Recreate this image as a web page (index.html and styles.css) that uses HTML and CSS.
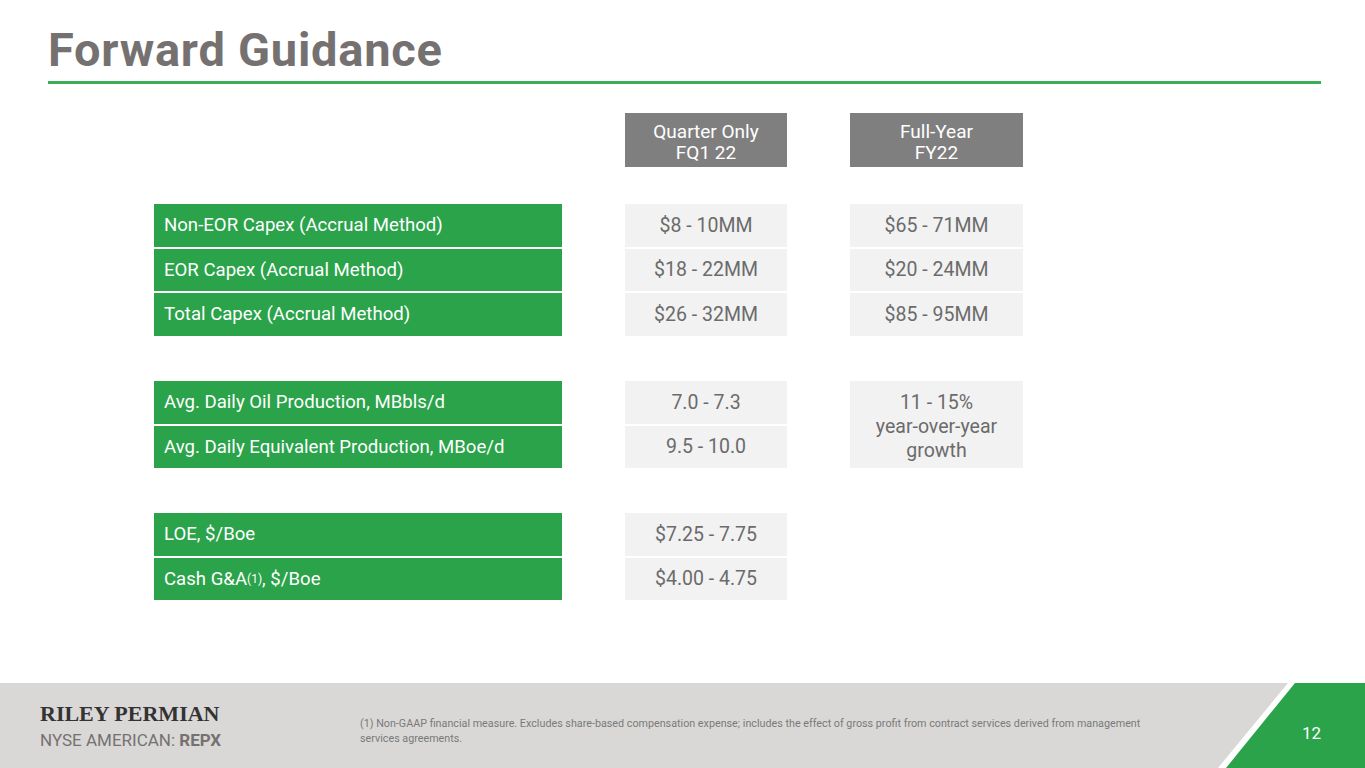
FILE: index.html
```html
<!DOCTYPE html>
<html lang="en">
<head>
<meta charset="utf-8">
<title>Forward Guidance</title>
<link rel="stylesheet" href="styles.css">
</head>
<body>
<div class="slide">
  <main class="content">
    <h1 class="title">Forward Guidance</h1>
    <div class="rule"></div>
    <div class="table">
      <div class="head c1">Quarter Only<br>FQ1 22</div>
      <div class="head c2">Full-Year<br>FY22</div>
      <div class="sp sp1"></div>

      <div class="label r1">Non-EOR Capex (Accrual Method)</div>
      <div class="val c1 r1">$8 - 10MM</div>
      <div class="val c2 r1">$65 - 71MM</div>

      <div class="label r2">EOR Capex (Accrual Method)</div>
      <div class="val c1 r2">$18 - 22MM</div>
      <div class="val c2 r2">$20 - 24MM</div>

      <div class="label r3">Total Capex (Accrual Method)</div>
      <div class="val c1 r3">$26 - 32MM</div>
      <div class="val c2 r3">$85 - 95MM</div>

      <div class="sp sp2"></div>

      <div class="label r4">Avg. Daily Oil Production, MBbls/d</div>
      <div class="val c1 r4">7.0 - 7.3</div>
      <div class="val c2 r45 multi">11 - 15%<br>year-over-year<br>growth</div>

      <div class="label r5">Avg. Daily Equivalent Production, MBoe/d</div>
      <div class="val c1 r5">9.5 - 10.0</div>

      <div class="sp sp3"></div>

      <div class="label r6">LOE, $/Boe</div>
      <div class="val c1 r6">$7.25 - 7.75</div>

      <div class="label r7">Cash G&amp;A<sup>(1)</sup>, $/Boe</div>
      <div class="val c1 r7">$4.00 - 4.75</div>
    </div>
  </main>
  <footer class="footer">
    <div class="brand">
      <div class="brand-name">RILEY PERMIAN</div>
      <div class="brand-ticker">NYSE AMERICAN: <b>REPX</b></div>
    </div>
    <div class="footnote">(1) Non-GAAP financial measure. Excludes share-based compensation expense; includes the effect of gross profit from contract services derived from management<br>services agreements.</div>
    <div class="corner">
      <div class="corner-green"><span class="page-num">12</span></div>
    </div>
  </footer>
</div>
</body>
</html>
```

FILE: styles.css
```css
* { box-sizing: border-box; }
html, body { margin: 0; padding: 0; background: #ffffff; }
body { font-family: Roboto, "Liberation Sans", Arial, sans-serif; }

.slide {
  width: 1365px;
  height: 768px;
  display: flex;
  flex-direction: column;
  overflow: hidden;
}

.content {
  height: 683px;
  padding: 0 44px 0 48px;
}

.title {
  margin: 0;
  padding-top: 25px;
  font-size: 47px;
  line-height: 50px;
  font-weight: 700;
  color: #767171;
  letter-spacing: 0.75px;
}

.rule {
  margin-top: 6px;
  height: 3px;
  background: #3cae57;
}

.table {
  margin-top: 29px;
  margin-left: 106px;
  display: grid;
  grid-template-columns: 408px 63px 162px 63px 173px;
  grid-template-rows: 54px 33px 42.5px 42.5px 42.5px 41.5px 42.5px 42.5px 41px 42.5px 42.5px;
  row-gap: 2px;
}

.head {
  grid-row: 1;
  background: #7f7f7f;
  color: #ffffff;
  font-size: 19px;
  line-height: 21px;
  padding-top: 4px;
  text-align: center;
  display: flex;
  align-items: center;
  justify-content: center;
}

.c1 { grid-column: 3; }
.c2 { grid-column: 5; }

.sp { grid-column: 1; }
.sp1 { grid-row: 2; }
.sp2 { grid-row: 6; }
.sp3 { grid-row: 9; }

.r1 { grid-row: 3; }
.r2 { grid-row: 4; }
.r3 { grid-row: 5; }
.r4 { grid-row: 7; }
.r5 { grid-row: 8; }
.r45 { grid-row: 7 / span 2; }
.r6 { grid-row: 10; }
.r7 { grid-row: 11; }

.label {
  grid-column: 1;
  background: #2aa34a;
  color: #ffffff;
  font-size: 18.6px;
  padding-left: 10px;
  display: flex;
  align-items: center;
}

.label sup {
  font-size: 12px;
  line-height: 0;
  vertical-align: 8px;
}

.val {
  background: #f2f2f2;
  color: #6b6b6b;
  font-size: 19.5px;
  display: flex;
  align-items: center;
  justify-content: center;
  text-align: center;
}

.val.multi {
  line-height: 24px;
  align-items: flex-start;
  padding-top: 10px;
}

.footer {
  height: 85px;
  background: #d9d8d6;
  display: flex;
  position: relative;
}

.brand {
  width: 360px;
  padding: 20px 0 0 40px;
}

.brand-name {
  font-family: "Liberation Serif", "Times New Roman", serif;
  font-weight: 700;
  font-size: 22px;
  line-height: 22px;
  color: #333333;
}

.brand-ticker {
  margin-top: 5px;
  font-size: 17px;
  line-height: 20px;
  color: #767171;
}

.brand-ticker b { font-weight: 700; }

.footnote {
  width: 830px;
  padding-top: 33px;
  font-size: 10.75px;
  line-height: 15px;
  color: #7a7a7a;
}

.corner {
  margin-left: auto;
  width: 147px;
  height: 85px;
  background: #ffffff;
  clip-path: polygon(70px 0, 147px 0, 147px 85px, 0 85px);
}

.corner-green {
  width: 147px;
  height: 85px;
  background: #2aa34a;
  clip-path: polygon(77px 0, 147px 0, 147px 85px, 8px 85px);
  position: relative;
}

.page-num {
  position: absolute;
  left: 84px;
  top: 40px;
  font-size: 17px;
  line-height: 20px;
  color: #ffffff;
}
```
